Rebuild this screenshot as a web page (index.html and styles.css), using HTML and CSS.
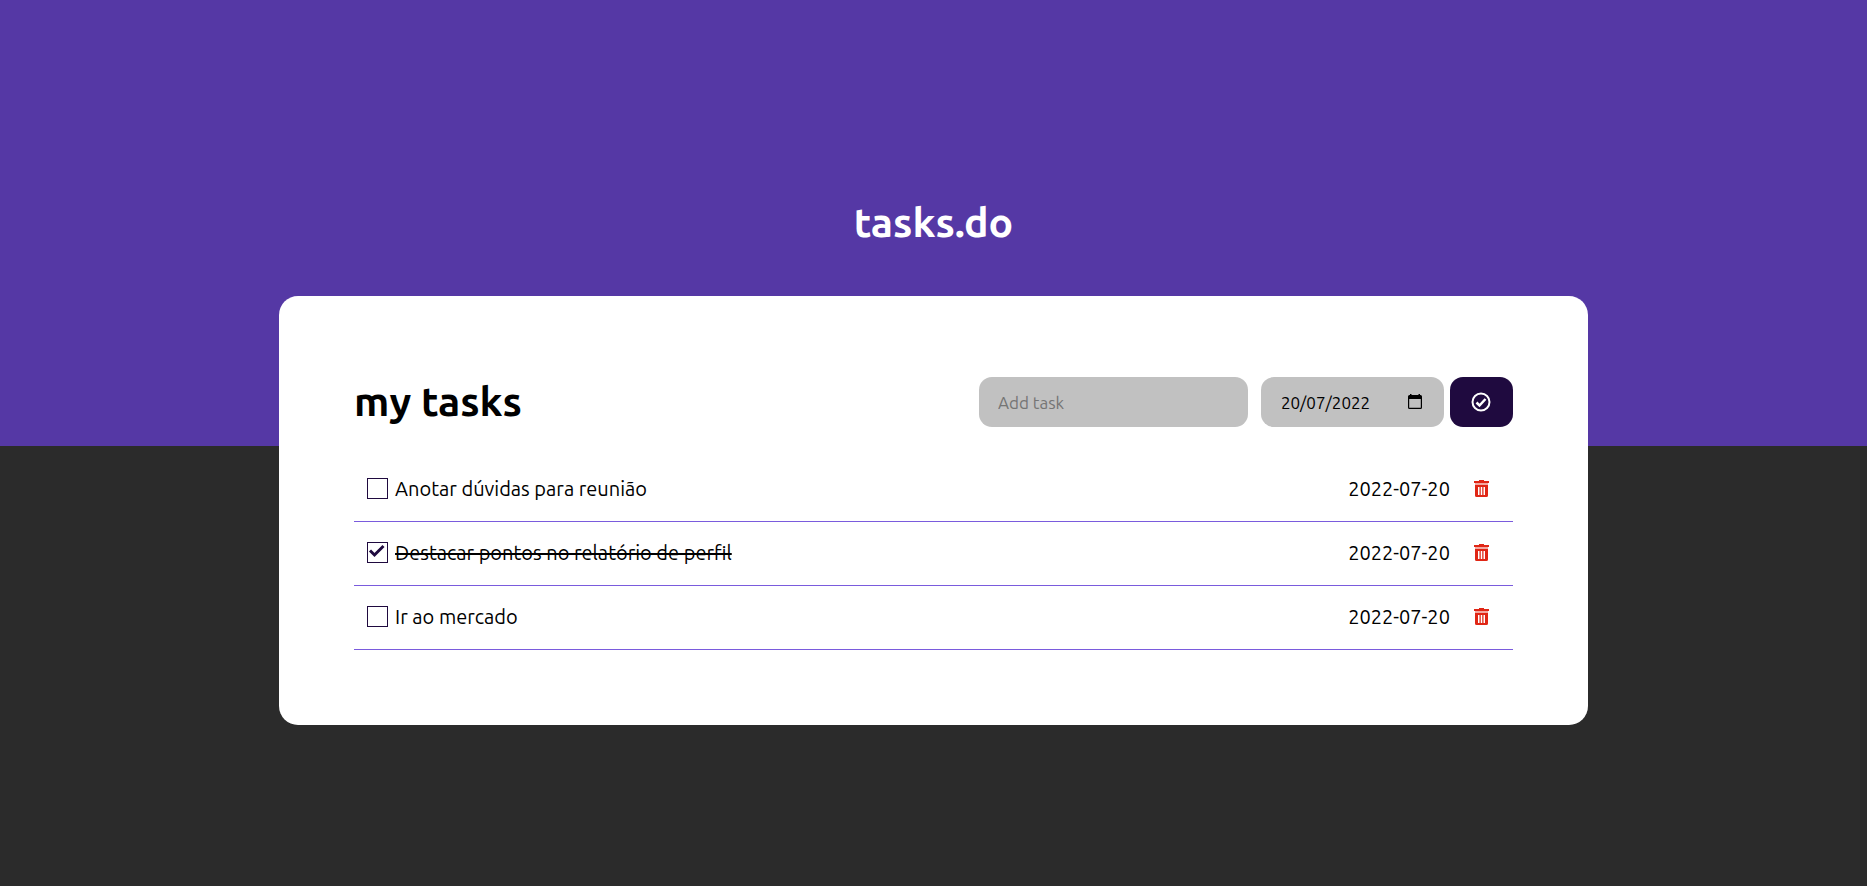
FILE: index.html
```html
<!DOCTYPE html>
<html lang="pt-BR">
<head>
<meta charset="utf-8">
<meta name="viewport" content="width=device-width, initial-scale=1">
<title>tasks.do</title>
<link rel="stylesheet" href="styles.css">
</head>
<body>
<svg class="sprite" aria-hidden="true">
  <symbol id="trash" viewBox="0 0 15 17">
    <path fill-rule="evenodd" d="M5 0h5v1h5v2H0V1h5zM1 5h13v10.500q0 1.500-1.500 1.500h-10Q1 17 1 15.500zM4 7v8h1.500V7zM6.750 7v8h1.500V7zM9.500 7v8h1.500V7z"/>
    <path opacity=".4" d="M1 3h13v2H1z"/>
  </symbol>
</svg>
<h1 class="logo">tasks.do</h1>
<main class="card">
  <header class="card-header">
    <h2 class="title">my tasks</h2>
    <form class="task-form">
      <input class="field task-field" type="text" placeholder="Add task" aria-label="Add task">
      <div class="date-box">
        <input class="field date-field" type="text" value="20/07/2022" aria-label="Date">
        <svg class="calendar" viewBox="0 0 14 15" aria-hidden="true"><path fill-rule="evenodd" d="M2 0h1.500v1h7V0H12v1h.500Q14 1 14 2.500v11q0 1.500-1.500 1.500h-11Q0 15 0 13.500v-11Q0 1 1.500 1H2zM1.200 5v8.800h11.600V5z"/></svg>
      </div>
      <button class="submit" type="button" aria-label="Save task">
        <svg class="submit-icon" viewBox="0 0 20 20" aria-hidden="true"><circle cx="10" cy="10" r="8.500"/><path stroke-width="2.500" d="m5.500 10.500 3 3 6-6.500"/></svg>
      </button>
    </form>
  </header>
  <ul class="tasks">
    <li class="task">
      <input class="check" type="checkbox" id="task-1">
      <label class="name" for="task-1">Anotar dúvidas para reunião</label>
      <time class="date" datetime="2022-07-20">2022-07-20</time>
      <button class="delete" type="button" aria-label="Delete"><svg class="trash"><use href="#trash"/></svg></button>
    </li>
    <li class="task">
      <input class="check" type="checkbox" id="task-2" checked>
      <label class="name" for="task-2">Destacar pontos no relatório de perfil</label>
      <time class="date" datetime="2022-07-20">2022-07-20</time>
      <button class="delete" type="button" aria-label="Delete"><svg class="trash"><use href="#trash"/></svg></button>
    </li>
    <li class="task">
      <input class="check" type="checkbox" id="task-3">
      <label class="name" for="task-3">Ir ao mercado</label>
      <time class="date" datetime="2022-07-20">2022-07-20</time>
      <button class="delete" type="button" aria-label="Delete"><svg class="trash"><use href="#trash"/></svg></button>
    </li>
  </ul>
</main>
</body>
</html>
```
FILE: styles.css
```css
* {
  box-sizing: border-box;
  margin: 0;
  padding: 0;
}

body {
  min-height: 100vh;
  padding: 192px 0 40px;
  background: #2b2b2b linear-gradient(#5538a5, #5538a5) top / 100% 446px no-repeat;
  color: #000;
  font-family: Ubuntu, "Noto Sans", sans-serif;
  font-size: 20px;
}

input,
button {
  border: 0;
  font-family: inherit;
}

.sprite {
  display: none;
}

.logo,
.title {
  font-size: 41px;
  line-height: 60px;
  font-weight: 700;
}

.logo {
  margin-bottom: 44px;
  color: #fff;
  text-align: center;
}

.card {
  width: calc(70% + 2px);
  margin: 0 auto;
  padding: 75px;
  border-radius: 19px;
  background: #fff;
}

.card-header {
  display: flex;
  flex-wrap: wrap;
  align-items: center;
  justify-content: space-between;
  margin-bottom: 25px;
}

.task-form {
  display: flex;
  margin: 6px 0 4px;
}

.field {
  height: 50px;
  padding: 0 19px;
  border-radius: 13px;
  background: #c1c1c1;
  color: #000;
  font-size: 17px;
}

.field::placeholder {
  color: #757575;
}

.task-field {
  width: 269px;
  margin-right: 13px;
}

.date-box {
  position: relative;
  margin-right: 6px;
}

.date-field {
  width: 183px;
  padding-left: 20px;
}

.calendar {
  position: absolute;
  top: 17px;
  right: 22px;
  width: 14px;
  height: 15px;
}

.submit {
  display: grid;
  place-items: center;
  width: 63px;
  height: 50px;
  border-radius: 13px;
  background: #1f0a3f;
}

.submit-icon {
  width: 20px;
  height: 20px;
  fill: none;
  stroke: #fff;
  stroke-width: 2;
}

.tasks {
  list-style: none;
}

.task {
  display: flex;
  align-items: center;
  height: 64px;
  padding: 0 24px 2px 13px;
  border-bottom: 1px solid #7a5bdd;
}

.task:first-child {
  height: 66px;
  padding-top: 2px;
}

.check {
  appearance: none;
  width: 21px;
  height: 21px;
  margin-right: 7px;
  border: 1px solid #1f0a3f;
}

.check:checked {
  background: url("data:image/svg+xml,%3Csvg xmlns='http://www.w3.org/2000/svg' viewBox='0 0 19 19'%3E%3Cpath d='M2 7.500l4.500 4.500 9-9' fill='none' stroke='%231f0a3f' stroke-width='3'/%3E%3C/svg%3E");
}

.check:checked + .name {
  text-decoration: line-through 2px;
}

.date {
  margin-left: auto;
}

.delete {
  margin-left: 24px;
  background: none;
}

.trash {
  display: block;
  width: 15px;
  height: 17px;
  fill: #e02615;
}
```
